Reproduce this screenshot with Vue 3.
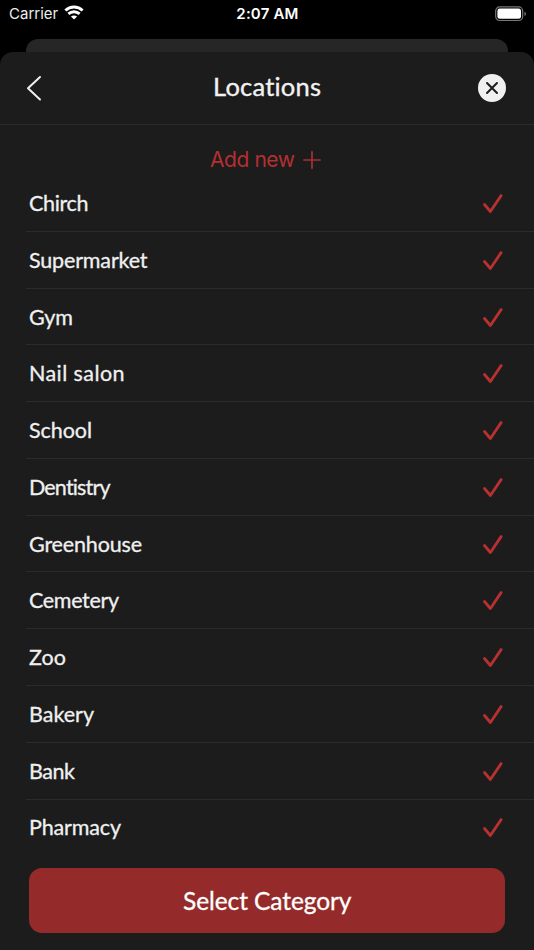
<script setup>
const locations = [
  { name: 'Chirch', width: 59.5 },
  { name: 'Supermarket', width: 118.5 },
  { name: 'Gym', width: 44 },
  { name: 'Nail salon', width: 95.5 },
  { name: 'School', width: 63 },
  { name: 'Dentistry', width: 81.5 },
  { name: 'Greenhouse', width: 113 },
  { name: 'Cemetery', width: 90 },
  { name: 'Zoo', width: 37 },
  { name: 'Bakery', width: 65 },
  { name: 'Bank', width: 46 },
  { name: 'Pharmacy', width: 92 },
]
</script>

<template>
  <div class="screen">
    <header class="status">
      <div class="carrier">
        <span>Carrier</span>
        <svg width="20" height="15" viewBox="0 0 20 15" fill="none" stroke="#fff" stroke-width="2.9">
          <path d="M1.4 5.5C6.2.9 13.8.9 18.6 5.5" />
          <path d="M4.4 8.9c3.1-2.9 8.1-2.9 11.2 0" />
          <path d="M6.9 11.6c1.7-1.6 4.5-1.6 6.2 0L10 14.6z" fill="#fff" stroke="none" />
        </svg>
      </div>
      <span class="time">2:07 AM</span>
      <svg class="battery" width="32" height="16" viewBox="0 0 32 16">
        <rect x=".7" y=".9" width="27" height="13.6" rx="4" fill="none" stroke="#777" stroke-width="1.2" />
        <rect x="2.4" y="2.6" width="23.6" height="10.2" rx="2.3" fill="#fff" />
        <path d="M29.5 5.4c2 .9 2 3.8 0 4.7z" fill="#777" />
      </svg>
    </header>
    <div class="behind"></div>
    <main class="sheet">
      <div class="bar">
        <svg class="back" width="16" height="26" viewBox="0 0 16 26">
          <path d="M14 2 2 13.3 14 24.5" fill="none" stroke="#f0f0f0" stroke-width="2" stroke-linecap="round" stroke-linejoin="round" />
        </svg>
        <svg class="title" width="112" height="36">
          <text x="3" y="26" textLength="108">Locations</text>
        </svg>
        <svg class="close" width="28" height="28" viewBox="0 0 28 28">
          <circle cx="14" cy="14" r="14" fill="#f0f0f0" />
          <path d="m9 9 10 10M19 9 9 19" stroke="#1c1c1c" stroke-width="2" stroke-linecap="round" />
        </svg>
      </div>
      <div class="add">
        <svg class="add-label" width="86" height="28"><text x="0" y="21" textLength="85">Add new</text></svg>
        <svg width="18" height="18" viewBox="0 0 18 18">
          <path d="M9 .8v16.4M.8 9h16.4" stroke="#a93030" stroke-width="1.7" stroke-linecap="round" />
        </svg>
      </div>
      <ul class="list">
        <li v-for="item in locations" :key="item.name" class="row">
          <svg class="name" width="180" height="36">
            <text x="1" y="25" :textLength="item.width">{{ item.name }}</text>
          </svg>
          <svg class="check" width="20" height="20" viewBox="0 0 20 20">
            <path d="m1.5 10.5 5.9 7L18.1 1.6" fill="none" stroke="#b93030" stroke-width="2.8" stroke-linecap="round" stroke-linejoin="round" />
          </svg>
        </li>
      </ul>
      <button class="select">
        <svg width="172" height="40"><text x="2" y="29" textLength="168.5">Select Category</text></svg>
      </button>
    </main>
  </div>
</template>

<style>
body {
  background: #000;
}
</style>

<style scoped>
.screen {
  box-sizing: border-box;
  width: 534px;
  height: 950px;
  overflow: hidden;
  background: #000;
  display: flex;
  flex-direction: column;
  font-family: Lato, sans-serif;
  font-variant-ligatures: none;
}
svg {
  display: block;
  flex: none;
}
.status {
  height: 39px;
  box-sizing: border-box;
  padding: 4px 7px 0 9px;
  display: grid;
  grid-template-columns: 1fr auto 1fr;
  align-items: start;
  color: #fff;
  font: 15px/20px Inter, sans-serif;
}
.carrier {
  display: flex;
  gap: 6px;
  color: #eee;
}
.carrier svg {
  margin-top: 1px;
}
.time {
  font-weight: 600;
  font-size: 15px;
  letter-spacing: 0.2px;
  margin-right: 1px;
}
.battery {
  justify-self: end;
  margin: 1.5px 0 0;
}
.behind {
  height: 25px;
  flex: none;
  margin: 0 26px -12px;
  border-radius: 12px 12px 0 0;
  background: #262626;
}
.sheet {
  flex: 1;
  display: flex;
  flex-direction: column;
  border-radius: 13px 13px 0 0;
  background: #1c1c1c;
}
.bar {
  height: 73px;
  box-sizing: border-box;
  border-bottom: 1px solid #2b2b2b;
  padding: 0 28px 0 26px;
  display: flex;
  justify-content: space-between;
  align-items: center;
}
.title {
  margin-left: 12px;
  fill: #f2f2f2;
  stroke: #f2f2f2;
  stroke-width: 0.35px;
  font-size: 25.5px;
}
.add {
  height: 50.1px;
  box-sizing: border-box;
  padding: 21px 3px 0 0;
  display: flex;
  justify-content: center;
  align-items: flex-start;
  gap: 7px;
}
.add > svg:last-child {
  margin-top: 5px;
}
.add-label {
  fill: #b52f31;
  font: 21px Inter, sans-serif;
}
.list {
  margin: 0;
  padding: 0 0 0 26px;
  list-style: none;
}
.row {
  height: 56.77px;
  box-sizing: border-box;
  border-bottom: 1px solid #2b2b2b;
  padding: 2px 31px 0 2px;
  display: flex;
  justify-content: space-between;
  align-items: center;
}
.row:last-child {
  border-bottom-color: transparent;
}
.name {
  fill: #f0f0f0;
  stroke: #f0f0f0;
  stroke-width: 0.3px;
  font-size: 21.5px;
}
.select {
  height: 64.5px;
  flex: none;
  margin: 12.2px 29px 0;
  padding: 0;
  border: 0;
  border-radius: 13px;
  background: #952a2a;
  display: flex;
  justify-content: center;
  align-items: center;
}
.select svg {
  fill: #fff;
  stroke: #fff;
  stroke-width: 0.3px;
  font: 24.5px Lato, sans-serif;
  font-variant-ligatures: none;
}
</style>
